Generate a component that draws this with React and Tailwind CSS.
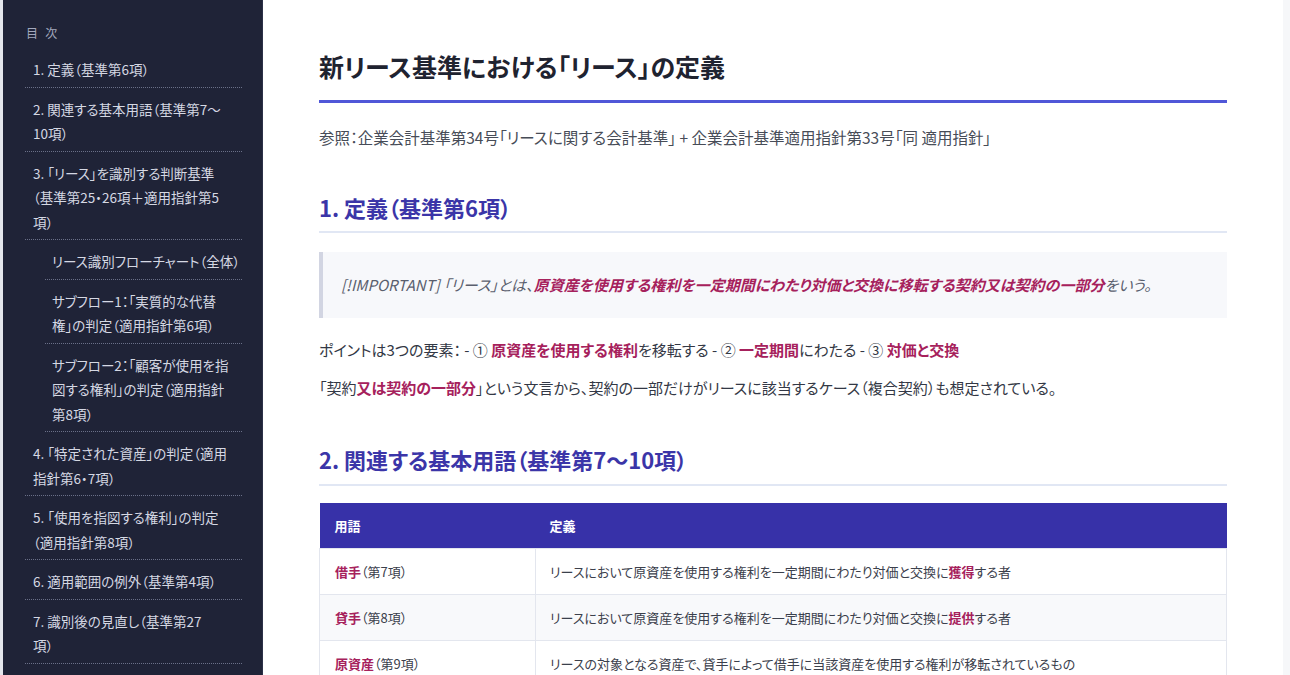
import React from "react";

const jp = { fontFamily: '"Noto Sans CJK JP", "Noto Sans", sans-serif', fontFeatureSettings: '"palt"' };

const toc = [
  { t: ["1. 定義（基準第6項）"] },
  { t: ["2. 関連する基本用語（基準第7〜", "10項）"] },
  { t: ["3. 「リース」を識別する判断基準", "（基準第25・26項＋適用指針第5", "項）"] },
  { t: ["リース識別フローチャート（全体）"], sub: true },
  { t: ["サブフロー1：「実質的な代替", "権」の判定（適用指針第6項）"], sub: true },
  { t: ["サブフロー2：「顧客が使用を指", "図する権利」の判定（適用指針", "第8項）"], sub: true },
  { t: ["4. 「特定された資産」の判定（適用", "指針第6・7項）"] },
  { t: ["5. 「使用を指図する権利」の判定", "（適用指針第8項）"] },
  { t: ["6. 適用範囲の例外（基準第4項）"] },
  { t: ["7. 識別後の見直し（基準第27", "項）"] },
];

const A = ({ children }) => <strong className="font-bold text-[#a6215c]">{children}</strong>;

export default function App() {
  return (
    <div className="flex h-[675px] w-[1290px] overflow-hidden bg-white" style={jp}>
      <div className="w-[3px] shrink-0 bg-[#e4e6ec]" />
      <aside className="w-[260px] shrink-0 bg-[#1f2337] border-r border-[#2c3148] pl-[22px] pr-[20px] pt-[24px]">
        <div className="text-[12px] leading-[18px] text-[#a3a8bd] tracking-[0.6em] pl-[1px]">目次</div>
        <ul className="mt-[6px]">
          {toc.map((it, i) => (
            <li
              key={i}
              className={`border-b border-dotted border-[#6a7088] pt-[9px] pb-[5px] text-[13.5px] leading-[24.5px] text-[#d5d8e3] whitespace-nowrap ${it.sub ? "ml-[20px] pl-[7px]" : "pl-[8px]"}`}
            >
              {it.t.map((l, j) => (
                <div key={j}>{l}</div>
              ))}
            </li>
          ))}
        </ul>
      </aside>
      <main className="flex-1 min-w-0 px-[56px] pt-[46px] text-[#333845]">
        <h1 className="text-[25px] leading-[40px] font-bold text-[#1f2330] pb-[14px] border-b-[3px] border-[#5057d8]">
          新リース基準における「リース」の定義
        </h1>
        <p className="mt-[21px] text-[15.5px] leading-[26px] text-[#474c57]">
          参照：企業会計基準第34号「リースに関する会計基準」 + 企業会計基準適用指針第33号「同 適用指針」
        </p>
        <h2 className="mt-[41px] text-[22px] leading-[32px] font-bold text-[#3b35a8] pb-[8px] border-b-2 border-[#e1e7f4]">
          1. 定義（基準第6項）
        </h2>
        <blockquote className="mt-[19px] bg-[#f7f8fb] border-l-4 border-[#d2d5e2] pl-[18px] py-[20px] text-[15px] leading-[26px] italic text-[#5a5f6e]">
          [!IMPORTANT] 「リース」とは、<A>原資産を使用する権利を一定期間にわたり対価と交換に移転する契約又は契約の一部分</A>をいう。
        </blockquote>
        <p className="mt-[19px] text-[15px] leading-[26px]">
          ポイントは3つの要素： - ① <A>原資産を使用する権利</A>を移転する - ② <A>一定期間</A>にわたる - ③ <A>対価と交換</A>
        </p>
        <p className="mt-[12px] text-[15px] leading-[26px]">
          「契約<A>又は契約の一部分</A>」という文言から、契約の一部だけがリースに該当するケース（複合契約）も想定されている。
        </p>
        <h2 className="mt-[42px] text-[22px] leading-[32px] font-bold text-[#3b35a8] pb-[9px] border-b-2 border-[#e1e7f4]">
          2. 関連する基本用語（基準第7〜10項）
        </h2>
        <table className="mt-[17px] w-full border-collapse text-[13px] leading-[21px]">
          <thead>
            <tr className="bg-[#3731a8] text-white">
              <th className="w-[216px] text-left font-bold px-[15px] py-[12px]">用語</th>
              <th className="text-left font-bold px-[14px] py-[12px]">定義</th>
            </tr>
          </thead>
          <tbody className="text-[#3b404c]">
            <tr className="bg-white">
              <td className="border border-[#e3e6ee] px-[15px] py-[12px]"><A>借手</A>（第7項）</td>
              <td className="border border-[#e3e6ee] px-[14px] py-[12px]">リースにおいて原資産を使用する権利を一定期間にわたり対価と交換に<A>獲得</A>する者</td>
            </tr>
            <tr className="bg-[#f8f9fb]">
              <td className="border border-[#e3e6ee] px-[15px] py-[12px]"><A>貸手</A>（第8項）</td>
              <td className="border border-[#e3e6ee] px-[14px] py-[12px]">リースにおいて原資産を使用する権利を一定期間にわたり対価と交換に<A>提供</A>する者</td>
            </tr>
            <tr className="bg-white">
              <td className="border border-[#e3e6ee] px-[15px] py-[12px]"><A>原資産</A>（第9項）</td>
              <td className="border border-[#e3e6ee] px-[14px] py-[12px]">リースの対象となる資産で、貸手によって借手に当該資産を使用する権利が移転されているもの</td>
            </tr>
          </tbody>
        </table>
      </main>
      <div className="w-[7px] shrink-0 bg-[#f6f7f9]" />
    </div>
  );
}
